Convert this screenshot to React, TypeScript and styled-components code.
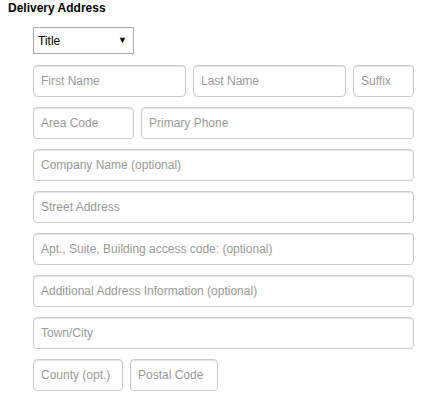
import * as React from 'react'
import styled, { createGlobalStyle } from 'styled-components'

const GlobalStyle = createGlobalStyle`
  html, body {
    margin: 0;
    background: #fff;
  }
  body {
    padding: 0 8px;
    font-family: "Liberation Sans", Arial, sans-serif;
    font-size: 12px;
    color: #000;
  }
`

const Heading = styled.h3`
  margin: 0;
  font-size: 12px;
  line-height: 16px;
  font-weight: bold;
`

const Fields = styled.div`
  margin: 11px 0 0 25px;
  display: flex;
  flex-direction: column;
  gap: 10px;
`

const Row = styled.div<{ $cols: string }>`
  display: grid;
  grid-template-columns: ${p => p.$cols};
  gap: 7px;
`

const SelectWrap = styled.div`
  position: relative;
  width: 101px;
  height: 27px;
  margin-bottom: 1px;
`

const Select = styled.select`
  appearance: none;
  box-sizing: border-box;
  width: 100%;
  height: 100%;
  margin: 0;
  padding: 0 0 0 4px;
  border: 1px solid #a9a9a9;
  border-radius: 0;
  background: #fff;
  font-family: "Liberation Sans", Arial, sans-serif;
  font-size: 12px;
  color: #000;
  outline: none;
`

const Arrow = styled.span`
  position: absolute;
  right: 7px;
  top: 8px;
  font-size: 9px;
  line-height: 10px;
  pointer-events: none;
`

const Input = styled.input`
  box-sizing: border-box;
  width: 100%;
  height: 32px;
  margin: 0;
  padding: 0 7px;
  border: 1px solid #cbcbcb;
  border-radius: 4px;
  box-shadow: inset 0 1px 1px rgba(0, 0, 0, 0.12);
  background: #fff;
  font-family: "Liberation Sans", Arial, sans-serif;
  font-size: 12px;
  outline: none;
  &::placeholder {
    color: #999;
    opacity: 1;
  }
`

const App: React.FC = () => {
  return (
    <>
      <GlobalStyle />
      <Heading>Delivery Address</Heading>
      <Fields>
        <SelectWrap>
          <Select defaultValue="">
            <option value="">Title</option>
            <option>Mr</option>
            <option>Mrs</option>
            <option>Ms</option>
          </Select>
          <Arrow>▼</Arrow>
        </SelectWrap>
        <Row $cols="153px 153px 1fr">
          <Input placeholder="First Name" />
          <Input placeholder="Last Name" />
          <Input placeholder="Suffix" />
        </Row>
        <Row $cols="101px 1fr">
          <Input placeholder="Area Code" />
          <Input placeholder="Primary Phone" />
        </Row>
        <Input placeholder="Company Name (optional)" />
        <Input placeholder="Street Address" />
        <Input placeholder="Apt., Suite, Building access code: (optional)" />
        <Input placeholder="Additional Address Information (optional)" />
        <Input placeholder="Town/City" />
        <Row $cols="90px 88px">
          <Input placeholder="County (opt.)" />
          <Input placeholder="Postal Code" />
        </Row>
      </Fields>
    </>
  )
}

export default App
